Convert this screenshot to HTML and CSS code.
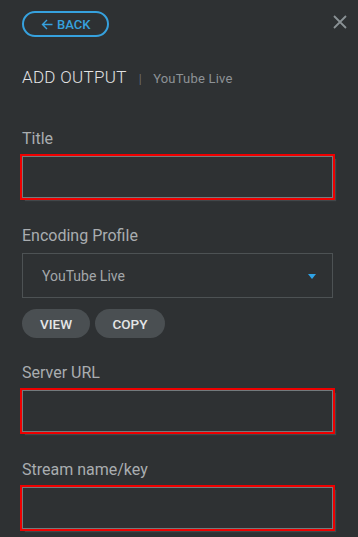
FILE: index.html
```html
<!DOCTYPE html>
<html lang="en">
<head>
    <meta charset="UTF-8">
    <meta name="viewport" content="width=device-width, initial-scale=1.0">
    <title>Add Output</title>
    <link rel="stylesheet" href="styles.css">
</head>
<body>
    <div class="panel">
        <div class="top-bar">
            <button class="back-btn" type="button">
                <svg class="back-arrow" width="12" height="11" viewBox="0 0 12 11"><path d="M11.5 5.5H1.5M6 1L1.5 5.5L6 10" fill="none" stroke="currentColor" stroke-width="1.4"/></svg>
                BACK
            </button>
            <button class="close-btn" type="button" aria-label="Close">
                <svg width="14" height="14" viewBox="0 0 14 14"><path d="M1 1L13 13M13 1L1 13" stroke="currentColor" stroke-width="1.8"/></svg>
            </button>
        </div>

        <h1 class="heading">ADD OUTPUT <span class="sep">|</span> <span class="sub">YouTube Live</span></h1>

        <form class="output-form">
            <div class="field">
                <label for="title">Title</label>
                <input type="text" id="title" class="text-input invalid">
            </div>

            <div class="field">
                <label for="profile">Encoding Profile</label>
                <div class="select-box" id="profile">
                    <span>YouTube Live</span>
                    <span class="caret"></span>
                </div>
                <div class="profile-actions">
                    <button type="button" class="pill-btn">VIEW</button>
                    <button type="button" class="pill-btn">COPY</button>
                </div>
            </div>

            <div class="field">
                <label for="server">Server URL</label>
                <input type="text" id="server" class="text-input invalid">
            </div>

            <div class="field">
                <label for="key">Stream name/key</label>
                <input type="text" id="key" class="text-input invalid">
            </div>
        </form>
    </div>
</body>
</html>
```

FILE: styles.css
```css
* {
    margin: 0;
    padding: 0;
    box-sizing: border-box;
}

body {
    font-family: Roboto, "Liberation Sans", sans-serif;
    background: #2e3133;
    color: #a9adb0;
}

.panel {
    padding: 11px 25px 0 22px;
}

/* Barra superior */
.top-bar {
    display: flex;
    justify-content: space-between;
    align-items: flex-start;
}

.back-btn {
    display: flex;
    align-items: center;
    gap: 4px;
    height: 26px;
    width: 87px;
    padding-left: 17px;
    border: 2px solid #36a1de;
    border-radius: 13px;
    background: transparent;
    color: #36a1de;
    font-family: inherit;
    font-size: 13px;
    font-weight: 500;
}

.close-btn {
    margin: 4px -14px 0 0;
    background: none;
    border: none;
    color: #8a9195;
    width: 14px;
    height: 14px;
}

.close-btn svg {
    display: block;
}

/* Título */
.heading {
    margin-top: 30px;
    font-size: 17px;
    font-weight: 300;
    line-height: 20px;
    color: #e2e3e4;
    letter-spacing: 0.3px;
}

.heading .sep {
    font-size: 13px;
    color: #7d8286;
    margin: 0 7px 0 8px;
    letter-spacing: 0;
}

.heading .sub {
    font-size: 13px;
    font-weight: 400;
    color: #8d9296;
    letter-spacing: 0.2px;
}

/* Formulário */
.output-form {
    margin-top: 40px;
}

.field {
    margin-bottom: 28px;
}

.field label {
    display: block;
    font-size: 16px;
    line-height: 20px;
    font-weight: 400;
    color: #a9adb0;
    margin-bottom: 7px;
}

.text-input {
    display: block;
    width: 100%;
    height: 42px;
    background: #2e3133;
    border: 1px solid #737a7d;
    outline: 2px solid #ee0000;
    box-shadow: 3px 3px 1px #43484b;
}

.select-box {
    display: flex;
    justify-content: space-between;
    align-items: center;
    height: 45px;
    padding: 0 16px 0 19px;
    border: 1px solid #4d5254;
    font-size: 14px;
    color: #a3a7aa;
}

.caret {
    width: 0;
    height: 0;
    border-left: 4px solid transparent;
    border-right: 4px solid transparent;
    border-top: 5px solid #2fa3e6;
    margin-top: 1px;
}

.profile-actions {
    display: flex;
    gap: 5px;
    margin-top: 11px;
    margin-bottom: -3px;
}

.pill-btn {
    height: 29px;
    padding: 0;
    border: none;
    border-radius: 15px;
    background: #4a4f52;
    color: #e4e5e6;
    font-family: inherit;
    font-size: 13.5px;
    font-weight: 500;
}

.pill-btn:first-child {
    width: 68px;
}

.pill-btn:last-child {
    width: 70px;
}
```
